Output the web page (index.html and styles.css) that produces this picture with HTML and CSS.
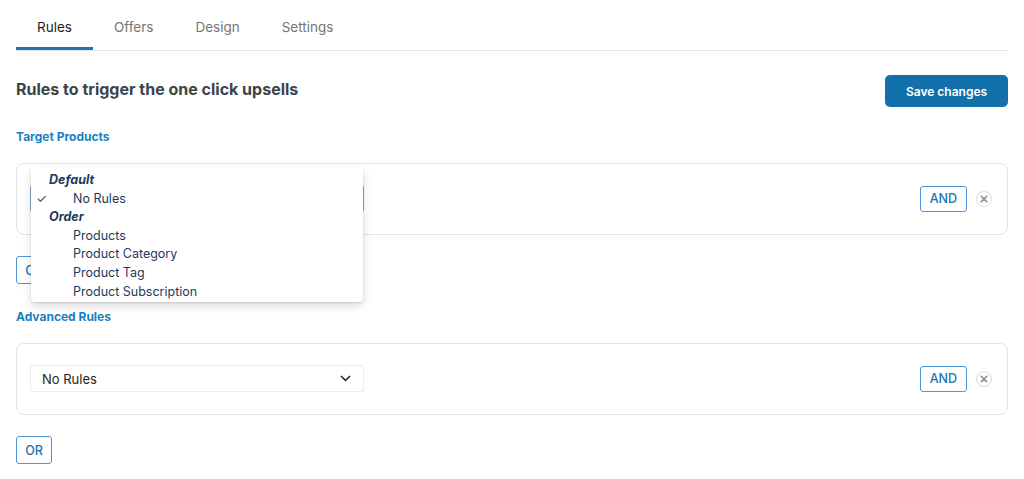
FILE: index.html
```html
<!DOCTYPE html>
<html lang="en">
<head>
<meta charset="utf-8">
<title>Rules</title>
<link rel="stylesheet" href="styles.css">
</head>
<body>
<div class="page">
  <nav class="tabs">
    <a class="tab active">Rules</a>
    <a class="tab">Offers</a>
    <a class="tab">Design</a>
    <a class="tab">Settings</a>
  </nav>

  <div class="head-row">
    <h1 class="title">Rules to trigger the one click upsells</h1>
    <button class="btn-primary">Save changes</button>
  </div>

  <h2 class="section-label first">Target Products</h2>
  <div class="card">
    <div class="select-wrap">
      <div class="select focused"></div>
      <div class="menu">
        <div class="menu-group">Default</div>
        <div class="menu-item checked"><span class="check">✓</span>No Rules</div>
        <div class="menu-group">Order</div>
        <div class="menu-item">Products</div>
        <div class="menu-item">Product Category</div>
        <div class="menu-item">Product Tag</div>
        <div class="menu-item">Product Subscription</div>
      </div>
    </div>
    <div class="card-actions">
      <button class="btn-outline">AND</button>
      <span class="remove"><svg width="8" height="8" viewBox="0 0 8 8"><path d="M1.2 1.2 L6.8 6.8 M6.8 1.2 L1.2 6.8" stroke="#8c8f94" stroke-width="1.6" stroke-linecap="round"/></svg></span>
    </div>
  </div>
  <button class="btn-outline or">OR</button>

  <h2 class="section-label">Advanced Rules</h2>
  <div class="card">
    <div class="select-wrap">
      <div class="select">
        <span>No Rules</span>
        <svg class="chev" width="11" height="7" viewBox="0 0 11 7"><polyline points="1,1 5.5,5.5 10,1" fill="none" stroke="#1e1e1e" stroke-width="1.5"/></svg>
      </div>
    </div>
    <div class="card-actions">
      <button class="btn-outline">AND</button>
      <span class="remove"><svg width="8" height="8" viewBox="0 0 8 8"><path d="M1.2 1.2 L6.8 6.8 M6.8 1.2 L1.2 6.8" stroke="#8c8f94" stroke-width="1.6" stroke-linecap="round"/></svg></span>
    </div>
  </div>
  <button class="btn-outline or">OR</button>
</div>
</body>
</html>
```

FILE: styles.css
```css
* { box-sizing: border-box; }
html, body { margin: 0; padding: 0; background: #fff; }
body {
  font-family: Inter, "Liberation Sans", Arial, sans-serif;
  color: #1e1e1e;
  font-size: 13px;
}
.page { padding: 0 16px; }

.tabs {
  display: flex;
  border-bottom: 1px solid #e2e4e7;
  height: 51px;
}
.tab {
  display: block;
  padding: 19px 21px 0;
  height: 50px;
  line-height: 16px;
  font-size: 13.5px;
  color: #757575;
  border-bottom: 2px solid transparent;
}
.tab.active {
  color: #1e1e1e;
  border-bottom: 3px solid #2271b1;
}

.head-row {
  display: flex;
  align-items: center;
  justify-content: space-between;
  margin-top: 24px;
  height: 32px;
}
.title {
  margin: 0;
  font-size: 16px;
  font-weight: 700;
  color: #3c434a;
  line-height: 20px;
  padding-bottom: 4px;
}
.btn-primary {
  font-family: inherit;
  font-size: 12px;
  font-weight: 600;
  color: #fff;
  background: #1270aa;
  border: 0;
  border-radius: 5px;
  width: 123px;
  height: 32px;
  padding: 0;
}

.section-label {
  margin: 23px 0 16px;
  font-size: 12px;
  font-weight: 700;
  line-height: 20px;
  color: #1a7fc1;
}
.section-label.first { margin-top: 20px; }

.card {
  display: flex;
  align-items: center;
  justify-content: space-between;
  border: 1px solid #e2e4e7;
  border-radius: 8px;
  padding: 21px 15px 22px 13px;
}
.select-wrap { position: relative; width: 334px; }
.select {
  display: flex;
  align-items: center;
  justify-content: space-between;
  height: 27px;
  border: 1px solid #ececee;
  border-radius: 2px;
  padding: 0 12px 0 11px;
  font-size: 13px;
  color: #1e1e1e;
}
.select.focused { border-color: #7fa6cc; }
.chev { display: block; }

.menu {
  position: absolute;
  left: 1px;
  top: -18px;
  width: 332px;
  height: 135px;
  background: #fff;
  border-radius: 3px;
  box-shadow: 0 1px 2px rgba(0,0,0,0.12), 0 4px 10px rgba(0,0,0,0.14);
  padding: 4px 0 0;
  color: #1c3a5e;
  font-size: 12.5px;
  z-index: 5;
}
.menu-group {
  font-weight: 700;
  font-style: italic;
  line-height: 18.6px;
  padding-left: 18px;
}
.menu-item {
  position: relative;
  line-height: 18.6px;
  padding-left: 42px;
}
.check {
  position: absolute;
  left: 5px;
  top: 0;
  color: #3a4f6a;
}

.card-actions { display: flex; align-items: center; gap: 9px; }
.btn-outline {
  font-family: inherit;
  font-size: 12.5px;
  font-weight: 500;
  color: #2271b1;
  background: #fff;
  border: 1px solid #4f94d4;
  border-radius: 3px;
  height: 26px;
  padding: 0 9px;
}
.remove {
  display: flex;
  align-items: center;
  justify-content: center;
  width: 16px;
  height: 16px;
  border: 1px solid #dcdcde;
  border-radius: 50%;
}
.remove svg { display: block; }
.btn-outline.or {
  display: block;
  margin-top: 21px;
  height: 28px;
  width: 36px;
  padding: 0;
}
```
